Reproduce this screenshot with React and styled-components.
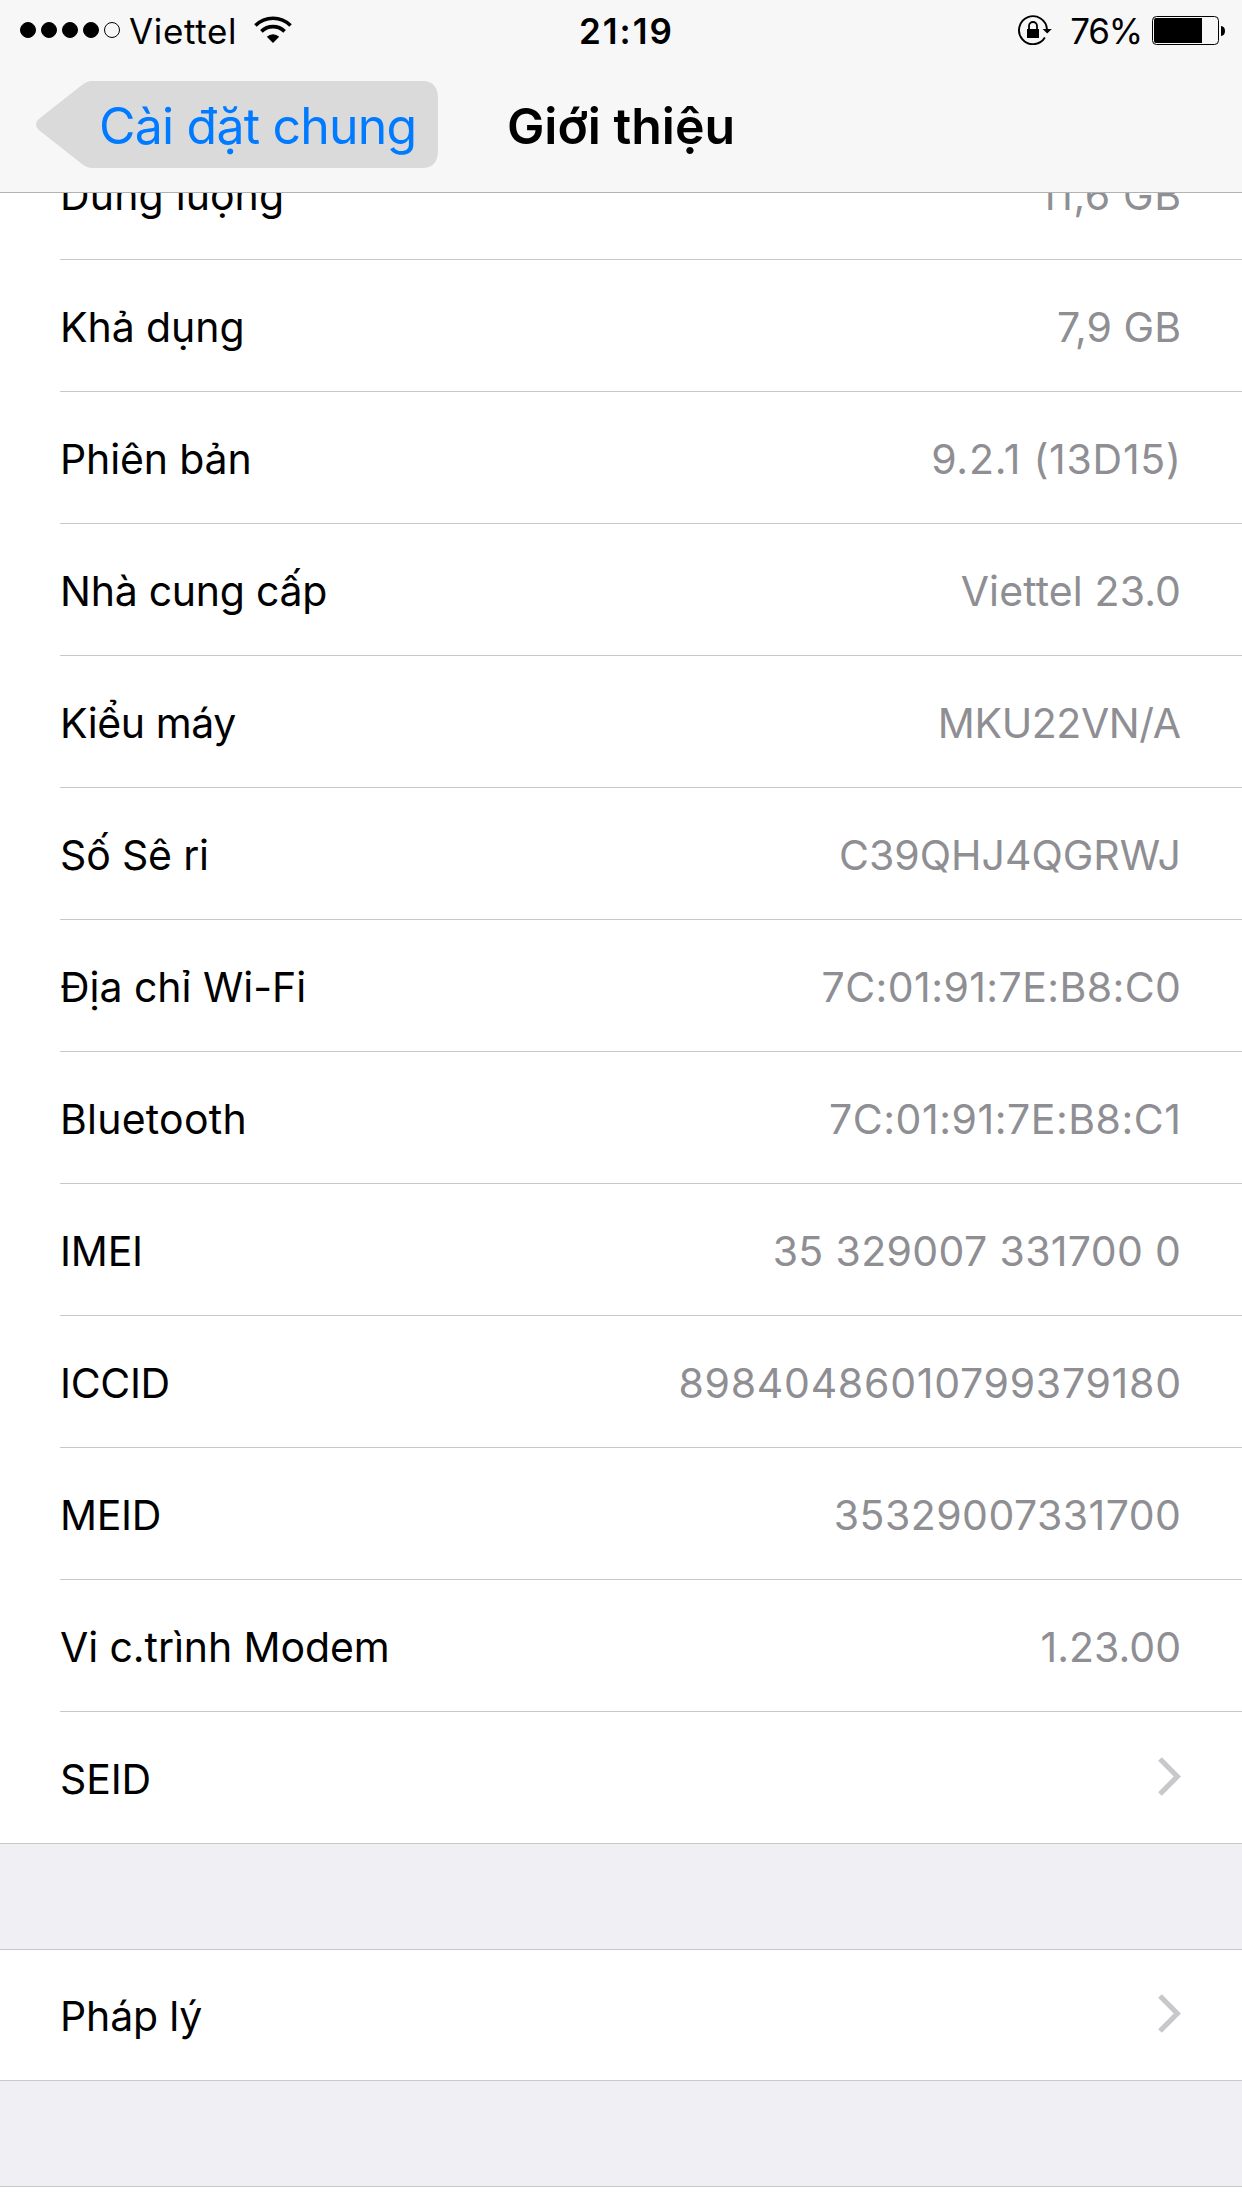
import * as React from 'react';
import styled, { createGlobalStyle } from 'styled-components';


const GlobalStyle = createGlobalStyle`
    body {
        margin: 0;
        background: #efeff4;
        font-family: Inter, 'Liberation Sans', sans-serif;
    }
`

const Screen = styled.div`
    display: flex;
    flex-direction: column;
    width: 1242px;
    height: 2208px;
    overflow: hidden;
    color: #000;
`

const Header = styled.header`
    flex: none;
    height: 192px;
    background: #f7f7f7;
    border-bottom: 1px solid #b2b2b2;
`

const StatusBar = styled.div`
    display: grid;
    grid-template-columns: 1fr auto 1fr;
    align-items: center;
    height: 60px;
    padding: 0 17px 0 20px;
`

const StatusSide = styled.div`
    display: flex;
    align-items: center;
    justify-content: ${props => props.$end ? 'flex-end' : 'flex-start'};
`

const StatusText = styled.span`
    padding-top: 1px;
    font-size: 35px;
    line-height: 42px;
    letter-spacing: ${props => props.$track || 0}px;
    font-weight: ${props => props.$bold ? 560 : 400};
`

const Carrier = styled(StatusText)`
    margin: 0 17px 0 9px;
`

const Clock = styled(StatusText)`
    padding-left: 8px;
`

const Percent = styled(StatusText)`
    margin: 0 10px 0 18px;
`

const Signal = styled.div`
    display: flex;
    gap: 5px;
`

const Dot = styled.span`
    box-sizing: border-box;
    width: 16px;
    height: 16px;
    border: 1px solid #000;
    border-radius: 50%;
    background: ${props => props.$on ? '#000' : 'transparent'};
`

const NavBar = styled.nav`
    display: grid;
    grid-template-columns: 1fr auto 1fr;
    align-items: center;
    height: 130px;
    padding: 0 36px;
`

const BackButton = styled.button`
    position: relative;
    display: flex;
    align-items: center;
    width: 402px;
    height: 88px;
    padding: 1px 0 0 63px;
    border: none;
    background: none;
    color: #007aff;
    font-family: inherit;
    font-size: 50px;
    letter-spacing: -0.8px;
    white-space: nowrap;
`

const BackShape = styled.svg`
    position: absolute;
    left: 0;
    top: 0;
`

const BackLabel = styled.span`
    position: relative;
`

const Title = styled.h1`
    margin: 0;
    padding-top: 1px;
    font-size: 50px;
    font-weight: 590;
    line-height: 60px;
`

const Scroller = styled.main`
    flex: 1;
    min-height: 0;
    overflow: hidden;
`

const Group = styled.section`
    background: #fff;
    margin-bottom: 105px;
    box-shadow: inset 0 1px #c8c7cc;
    &:first-child {
        margin-top: -65px;
    }
`

const Row = styled.div`
    box-sizing: border-box;
    height: 132px;
    padding-left: 60px;
    &:last-child {
        border-bottom: 1px solid #c8c7cc;
    }
`

const RowBody = styled.div`
    box-sizing: border-box;
    display: flex;
    align-items: center;
    justify-content: space-between;
    height: 132px;
    padding-right: 61px;
    border-bottom: 1px solid #c8c7cc;
    ${Row}:last-child > & {
        height: 131px;
        border-bottom: none;
    }
`

const Label = styled.span`
    padding-top: 3px;
    font-size: 41px;
    line-height: 50px;
    letter-spacing: ${props => props.$track || 0}px;
`

const Value = styled(Label)`
    color: #8e8e93;
    margin-right: ${props => -(props.$track || 0)}px;
`

const ChevronIcon = styled.svg`
    margin-bottom: 2px;
`

// [label, value, label tracking, value tracking]
const info = [
    ['Dung lượng', '11,6 GB', 0.18, 0.6],
    ['Khả dụng', '7,9 GB', -0.07, 0],
    ['Phiên bản', '9.2.1 (13D15)', -0.14, 0.75],
    ['Nhà cung cấp', 'Viettel 23.0', -0.25, 0.12],
    ['Kiểu máy', 'MKU22VN/A', -0.4, -0.4],
    ['Số Sê ri', 'C39QHJ4QGRWJ', -0.16, 0],
    ['Địa chỉ Wi-Fi', '7C:01:91:7E:B8:C0', -0.03, 0.42],
    ['Bluetooth', '7C:01:91:7E:B8:C1', 0.24, 0.53],
    ['IMEI', '35 329007 331700 0', -0.2, 0.36],
    ['ICCID', '89840486010799379180', -0.33, 0.74],
    ['MEID', '35329007331700', -0.3, 0.48],
    ['Vi c.trình Modem', '1.23.00', -0.08, 0],
    ['SEID', null, -0.12],
];

const WifiIcon = () => (
    <svg width="38" height="28" viewBox="0 0 38 28" fill="none" stroke="#000">
        <path d="M1.46 9.46 A24.8 24.8 0 0 1 36.54 9.46" strokeWidth="3.5" />
        <path d="M7.4 15.4 A16.4 16.4 0 0 1 30.6 15.4" strokeWidth="3.7" />
        <path d="M19 27 L12.8 20.8 A8.7 8.7 0 0 1 25.2 20.8 Z" fill="#000" stroke="none" />
    </svg>
);

const RotationLockIcon = () => (
    <svg width="34" height="30" viewBox="0 0 34 30" fill="none" stroke="#000">
        <path d="M26.9 22.6 A14 14 0 1 1 29 14.5" strokeWidth="1.9" />
        <path d="M24.6 14 H33.8 L29.2 18.6 Z" fill="#000" stroke="none" />
        <rect x="9" y="14" width="12" height="9" fill="#000" stroke="none" />
        <path d="M11 14.5 V11 A4 4 0 0 1 19 11 V14.5" strokeWidth="1.8" />
    </svg>
);

const BatteryIcon = () => (
    <svg width="73" height="29" viewBox="0 0 73 29">
        <rect x="0.5" y="0.5" width="66" height="28" rx="4" fill="none" stroke="#000" />
        <path d="M4 2 H50 V27 H4 Q2 27 2 25 V4 Q2 2 4 2 Z" />
        <path d="M69 10 Q73 10.5 73 15 Q73 19.5 69 20 Z" />
    </svg>
);

const Chevron = () => (
    <ChevronIcon width="23" height="39" viewBox="0 0 23 39" fill="none" stroke="#c7c7cc">
        <path d="M2 2 L19.3 19.5 L2 37" strokeWidth="5.2" />
    </ChevronIcon>
);

const InfoRow = ({ label, value, labelTrack, valueTrack }) => (
    <Row>
        <RowBody>
            <Label $track={labelTrack}>{label}</Label>
            {value ? <Value $track={valueTrack}>{value}</Value> : <Chevron />}
        </RowBody>
    </Row>
);

const App = () => {

    return (
        <Screen>
            <GlobalStyle />
            <Header>
                <StatusBar>
                    <StatusSide>
                        <Signal>
                            <Dot $on /><Dot $on /><Dot $on /><Dot $on /><Dot />
                        </Signal>
                        <Carrier $track={0.64}>Viettel</Carrier>
                        <WifiIcon />
                    </StatusSide>
                    <Clock $bold $track={2}>21:19</Clock>
                    <StatusSide $end>
                        <RotationLockIcon />
                        <Percent $track={-1.2}>76%</Percent>
                        <BatteryIcon />
                    </StatusSide>
                </StatusBar>
                <NavBar>
                    <BackButton>
                        <BackShape width="402" height="88" viewBox="0 0 402 88">
                            <path fill="#dadada" d="M56 0 H388 Q402 1 402 18 V69 Q402 86 388 87 H56 Q51 87 46 83 L4 50 Q-4 43.5 4 37 L46 4 Q51 0 56 0 Z" />
                        </BackShape>
                        <BackLabel>Cài đặt chung</BackLabel>
                    </BackButton>
                    <Title>Giới thiệu</Title>
                </NavBar>
            </Header>
            <Scroller>
                <Group>
                    {info.map(([label, value, labelTrack, valueTrack]) => (
                        <InfoRow key={label} label={label} value={value} labelTrack={labelTrack} valueTrack={valueTrack} />
                    ))}
                </Group>
                <Group>
                    <InfoRow label="Pháp lý" labelTrack={-0.15} />
                </Group>
                <Group>
                    <Row />
                </Group>
            </Scroller>
        </Screen>
    );

};

export default App;
